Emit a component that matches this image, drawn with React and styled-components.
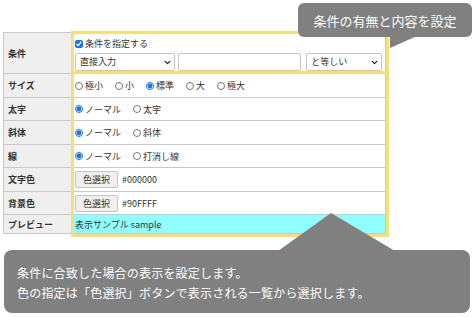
import React from 'react';
import styled, { createGlobalStyle } from 'styled-components';
import { ChevronDown } from 'lucide-react';

const GlobalStyle = createGlobalStyle`
  body {
    margin: 0;
    background: #fff;
    font-family: "Noto Sans CJK JP", "Noto Sans", sans-serif;
  }
`;

const Stage = styled.div`
  position: relative;
  width: 473px;
  height: 317px;
  overflow: hidden;
  padding: 32px 0 0 3px;
  box-sizing: border-box;
`;

const Table = styled.table`
  width: 383px;
  border-collapse: collapse;
  font-size: 9px;
  color: #333;
  table-layout: fixed;
`;

const Row = styled.tr`
  height: ${(p) => p.h}px;
`;

const Label = styled.th`
  width: 68px;
  box-sizing: border-box;
  background: #efefef;
  border: 1px solid #c9c9c9;
  text-align: left;
  font-weight: bold;
  padding: 0 4px;
`;

const Cell = styled.td`
  border: 1px solid #c9c9c9;
  padding: 0 3px;
  background: ${(p) => p.bg || '#fff'};
`;

const CondBox = styled.div`
  display: flex;
  flex-direction: column;
  gap: 2px;
  padding: 3px 0 2px;
`;

const Line = styled.div`
  display: flex;
  align-items: center;
  gap: ${(p) => p.gap || 12}px;
  height: ${(p) => p.h || 14}px;
`;

const Opt = styled.label`
  display: flex;
  align-items: center;
  gap: 2px;
`;

const Check = styled.input`
  width: 8px;
  height: 8px;
  margin: 0;
  accent-color: #1a73e8;
`;

const Controls = styled.div`
  display: flex;
  height: 18px;
`;

const SelectWrap = styled.div`
  position: relative;
  width: ${(p) => p.w}px;
  margin-right: ${(p) => p.mr || 0}px;
  height: 18px;
`;

const Select = styled.select`
  appearance: none;
  width: 100%;
  height: 100%;
  box-sizing: border-box;
  border: 1px solid #c4c4c4;
  border-radius: 2px;
  background: #fff;
  font: inherit;
  font-size: 9px;
  color: #333;
  padding: 0 0 0 4px;
`;

const Chevron = styled(ChevronDown)`
  position: absolute;
  right: 3px;
  top: 5px;
  pointer-events: none;
`;

const TextBox = styled.input`
  width: 123px;
  height: 18px;
  box-sizing: border-box;
  border: 1px solid #c4c4c4;
  border-radius: 2px;
  margin-right: 5px;
`;

const ColorButton = styled.button`
  width: 43px;
  height: 17px;
  padding: 0;
  border: 1px solid #c4c4c4;
  border-radius: 2px;
  background: #efefef;
  font: inherit;
  font-size: 9px;
  color: #333;
  margin-right: 4px;
`;

const ColorLine = styled.div`
  display: flex;
  align-items: center;
`;

const Frame = styled.div`
  position: absolute;
  left: 71px;
  width: 318px;
  top: ${(p) => p.top}px;
  height: ${(p) => p.h}px;
  border: 3px solid #f4e07a;
  box-sizing: border-box;
  pointer-events: none;
`;

const TopNote = styled.div`
  position: absolute;
  left: 298px;
  top: 3px;
  width: 174px;
  height: 34px;
  border-radius: 6px;
  background: #808080;
  color: #fff;
  font-size: 13px;
  line-height: 36px;
  text-align: center;
  z-index: 2;
`;

const TopTail = styled.svg`
  position: absolute;
  left: 92px;
  top: 33px;
`;

const BottomNote = styled.div`
  position: absolute;
  left: 4px;
  top: 250px;
  width: 466px;
  height: 63px;
  border-radius: 8px;
  background: #808080;
  color: #fff;
  font-size: 12px;
  letter-spacing: 0.2px;
  line-height: 19.5px;
  padding: 13px 0 0 13px;
  box-sizing: border-box;
  z-index: 2;
`;

const BottomTail = styled.svg`
  position: absolute;
  left: 274px;
  top: -37px;
`;

const Radios = ({ name, items, checked }) => (
  <Line>
    {items.map((it) => (
      <Opt key={it}>
        <Check type="radio" name={name} defaultChecked={it === checked} />
        {it}
      </Opt>
    ))}
  </Line>
);

const App = () => {
  return (
    <Stage>
      <GlobalStyle />
      <Table>
        <tbody>
          <Row h={41}>
            <Label>条件</Label>
            <Cell>
              <CondBox>
                <Line gap={2}>
                  <Check type="checkbox" defaultChecked />
                  条件を指定する
                </Line>
                <Controls>
                  <SelectWrap w={102} mr={3}>
                    <Select defaultValue="direct">
                      <option value="direct">直接入力</option>
                    </Select>
                    <Chevron size={9} strokeWidth={3.5} color="#222" />
                  </SelectWrap>
                  <TextBox type="text" />
                  <SelectWrap w={77}>
                    <Select defaultValue="eq">
                      <option value="eq">と等しい</option>
                    </Select>
                    <Chevron size={9} strokeWidth={3.5} color="#222" />
                  </SelectWrap>
                </Controls>
              </CondBox>
            </Cell>
          </Row>
          <Row h={24}>
            <Label>サイズ</Label>
            <Cell>
              <Radios name="size" items={['極小', '小', '標準', '大', '極大']} checked="標準" />
            </Cell>
          </Row>
          <Row h={23}>
            <Label>太字</Label>
            <Cell>
              <Radios name="bold" items={['ノーマル', '太字']} checked="ノーマル" />
            </Cell>
          </Row>
          <Row h={24}>
            <Label>斜体</Label>
            <Cell>
              <Radios name="italic" items={['ノーマル', '斜体']} checked="ノーマル" />
            </Cell>
          </Row>
          <Row h={23}>
            <Label>線</Label>
            <Cell>
              <Radios name="line" items={['ノーマル', '打消し線']} checked="ノーマル" />
            </Cell>
          </Row>
          <Row h={24}>
            <Label>文字色</Label>
            <Cell>
              <ColorLine>
                <ColorButton>色選択</ColorButton>#000000
              </ColorLine>
            </Cell>
          </Row>
          <Row h={23}>
            <Label>背景色</Label>
            <Cell>
              <ColorLine>
                <ColorButton>色選択</ColorButton>#90FFFF
              </ColorLine>
            </Cell>
          </Row>
          <Row h={19}>
            <Label>プレビュー</Label>
            <Cell bg="#90ffff">表示サンプル sample</Cell>
          </Row>
        </tbody>
      </Table>

      <Frame top={31} h={43} />
      <Frame top={71} h={166} />

      <TopNote>
        条件の有無と内容を設定
        <TopTail width="27" height="12" viewBox="0 0 27 12">
          <polygon points="0,0 0,12 27,0" fill="#808080" />
        </TopTail>
      </TopNote>

      <BottomNote>
        <BottomTail width="117" height="38" viewBox="0 0 117 38">
          <polygon points="53,0 0,38 117,38" fill="#808080" />
        </BottomTail>
        条件に合致した場合の表示を設定します。
        <br />
        色の指定は「色選択」ボタンで表示される一覧から選択します。
      </BottomNote>
    </Stage>
  );
};

export default App;
